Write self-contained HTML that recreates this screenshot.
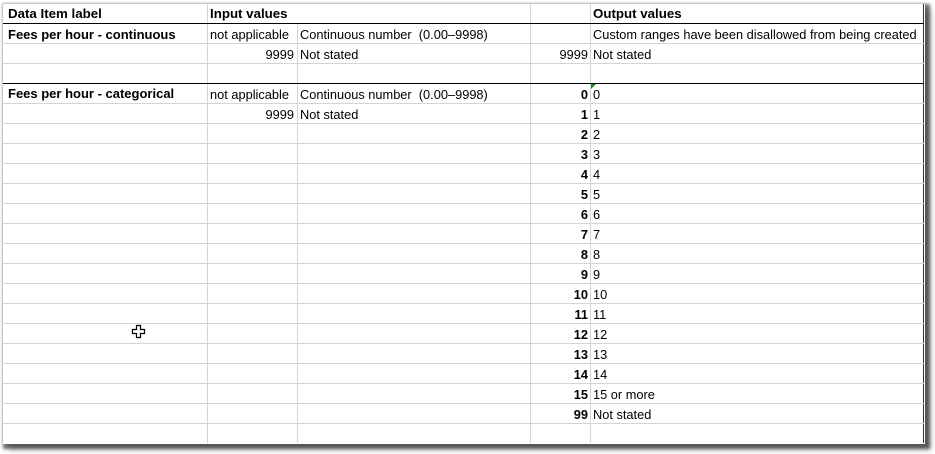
<!DOCTYPE html>
<html><head><meta charset="utf-8"><style>
body{margin:0;width:935px;height:454px;background:#fff;overflow:hidden;font-family:"Liberation Sans",Arial,sans-serif;font-size:12.8px;color:#000}
#s{position:absolute;left:2px;top:3px;width:922px;height:440px;background:#fff;border-left:1px solid #c8c8c8;border-top:1px solid #c8c8c8;box-shadow:3px 3px 3px 2px rgba(0,0,0,.55),6px 6px 6px rgba(0,0,0,.25)}
.h{position:absolute;left:3px;width:921px;height:1px;background:#d4d4d4}
.k{background:#000}
.v{position:absolute;width:1px;background:#d4d4d4}
.t{position:absolute;line-height:20px;white-space:nowrap;padding-top:1px}
.b{font-weight:bold}
.r{text-align:right}
</style></head><body>
<div id="s"></div>
<div class="v" style="left:207px;top:4px;height:439px"></div>
<div class="v" style="left:297px;top:24px;height:419px"></div>
<div class="v" style="left:530px;top:4px;height:439px"></div>
<div class="v" style="left:590px;top:4px;height:439px"></div>
<div class="v" style="left:923px;top:4px;height:439px;background:#333"></div>
<div class="h k" style="top:23px"></div>
<div class="h" style="top:43px"></div>
<div class="h" style="top:63px"></div>
<div class="h k" style="top:83px"></div>
<div style="position:absolute;left:591px;top:84px;width:0;height:0;border-top:5px solid #1a8a1a;border-right:5px solid transparent"></div>

<div class="t b" style="left:8px;top:3px;font-size:13.3px">Data Item label</div>
<div class="t b" style="left:210px;top:3px;font-size:13.3px">Input values</div>
<div class="t b" style="left:593px;top:3px;font-size:13.3px">Output values</div>

<div class="t b" style="left:8px;top:24px;font-size:13px">Fees per hour - continuous</div>
<div class="t" style="left:210px;top:24px">not applicable</div>
<div class="t" style="left:300px;top:24px">Continuous number&nbsp; (0.00–9998)</div>
<div class="t" style="left:593px;top:24px">Custom ranges have been disallowed from being created</div>
<div class="t r" style="left:210px;width:84px;top:44px">9999</div>
<div class="t" style="left:300px;top:44px">Not stated</div>
<div class="t r" style="left:532px;width:56px;top:44px">9999</div>
<div class="t" style="left:593px;top:44px">Not stated</div>

<div class="t b" style="left:8px;top:83px;font-size:13px">Fees per hour - categorical</div>
<div class="t" style="left:210px;top:84px">not applicable</div>
<div class="t" style="left:300px;top:84px">Continuous number&nbsp; (0.00–9998)</div>
<div class="t r" style="left:210px;width:84px;top:104px">9999</div>
<div class="t" style="left:300px;top:104px">Not stated</div>

<div class="t r b" style="left:532px;width:56px;top:84px">0</div><div class="t" style="left:593px;top:84px">0</div>
<div class="t r b" style="left:532px;width:56px;top:104px">1</div><div class="t" style="left:593px;top:104px">1</div>
<div class="t r b" style="left:532px;width:56px;top:124px">2</div><div class="t" style="left:593px;top:124px">2</div>
<div class="t r b" style="left:532px;width:56px;top:144px">3</div><div class="t" style="left:593px;top:144px">3</div>
<div class="t r b" style="left:532px;width:56px;top:164px">4</div><div class="t" style="left:593px;top:164px">4</div>
<div class="t r b" style="left:532px;width:56px;top:184px">5</div><div class="t" style="left:593px;top:184px">5</div>
<div class="t r b" style="left:532px;width:56px;top:204px">6</div><div class="t" style="left:593px;top:204px">6</div>
<div class="t r b" style="left:532px;width:56px;top:224px">7</div><div class="t" style="left:593px;top:224px">7</div>
<div class="t r b" style="left:532px;width:56px;top:244px">8</div><div class="t" style="left:593px;top:244px">8</div>
<div class="t r b" style="left:532px;width:56px;top:264px">9</div><div class="t" style="left:593px;top:264px">9</div>
<div class="t r b" style="left:532px;width:56px;top:284px">10</div><div class="t" style="left:593px;top:284px">10</div>
<div class="t r b" style="left:532px;width:56px;top:304px">11</div><div class="t" style="left:593px;top:304px">11</div>
<div class="t r b" style="left:532px;width:56px;top:324px">12</div><div class="t" style="left:593px;top:324px">12</div>
<div class="t r b" style="left:532px;width:56px;top:344px">13</div><div class="t" style="left:593px;top:344px">13</div>
<div class="t r b" style="left:532px;width:56px;top:364px">14</div><div class="t" style="left:593px;top:364px">14</div>
<div class="t r b" style="left:532px;width:56px;top:384px">15</div><div class="t" style="left:593px;top:384px">15 or more</div>
<div class="t r b" style="left:532px;width:56px;top:404px">99</div><div class="t" style="left:593px;top:404px">Not stated</div>

<div class="h" style="top:103px"></div><div class="h" style="top:123px"></div><div class="h" style="top:143px"></div>
<div class="h" style="top:163px"></div><div class="h" style="top:183px"></div><div class="h" style="top:203px"></div>
<div class="h" style="top:223px"></div><div class="h" style="top:243px"></div><div class="h" style="top:263px"></div>
<div class="h" style="top:283px"></div><div class="h" style="top:303px"></div><div class="h" style="top:323px"></div>
<div class="h" style="top:343px"></div><div class="h" style="top:363px"></div><div class="h" style="top:383px"></div>
<div class="h" style="top:403px"></div><div class="h" style="top:423px"></div>

<svg style="position:absolute;left:131px;top:324px" width="15" height="15" viewBox="0 0 15 15">
<path d="M5.5 1.5h4v4h4v4h-4v4h-4v-4h-4v-4h4z" fill="#fff" stroke="#000" stroke-width="1.2"/>
</svg>
</body></html>
